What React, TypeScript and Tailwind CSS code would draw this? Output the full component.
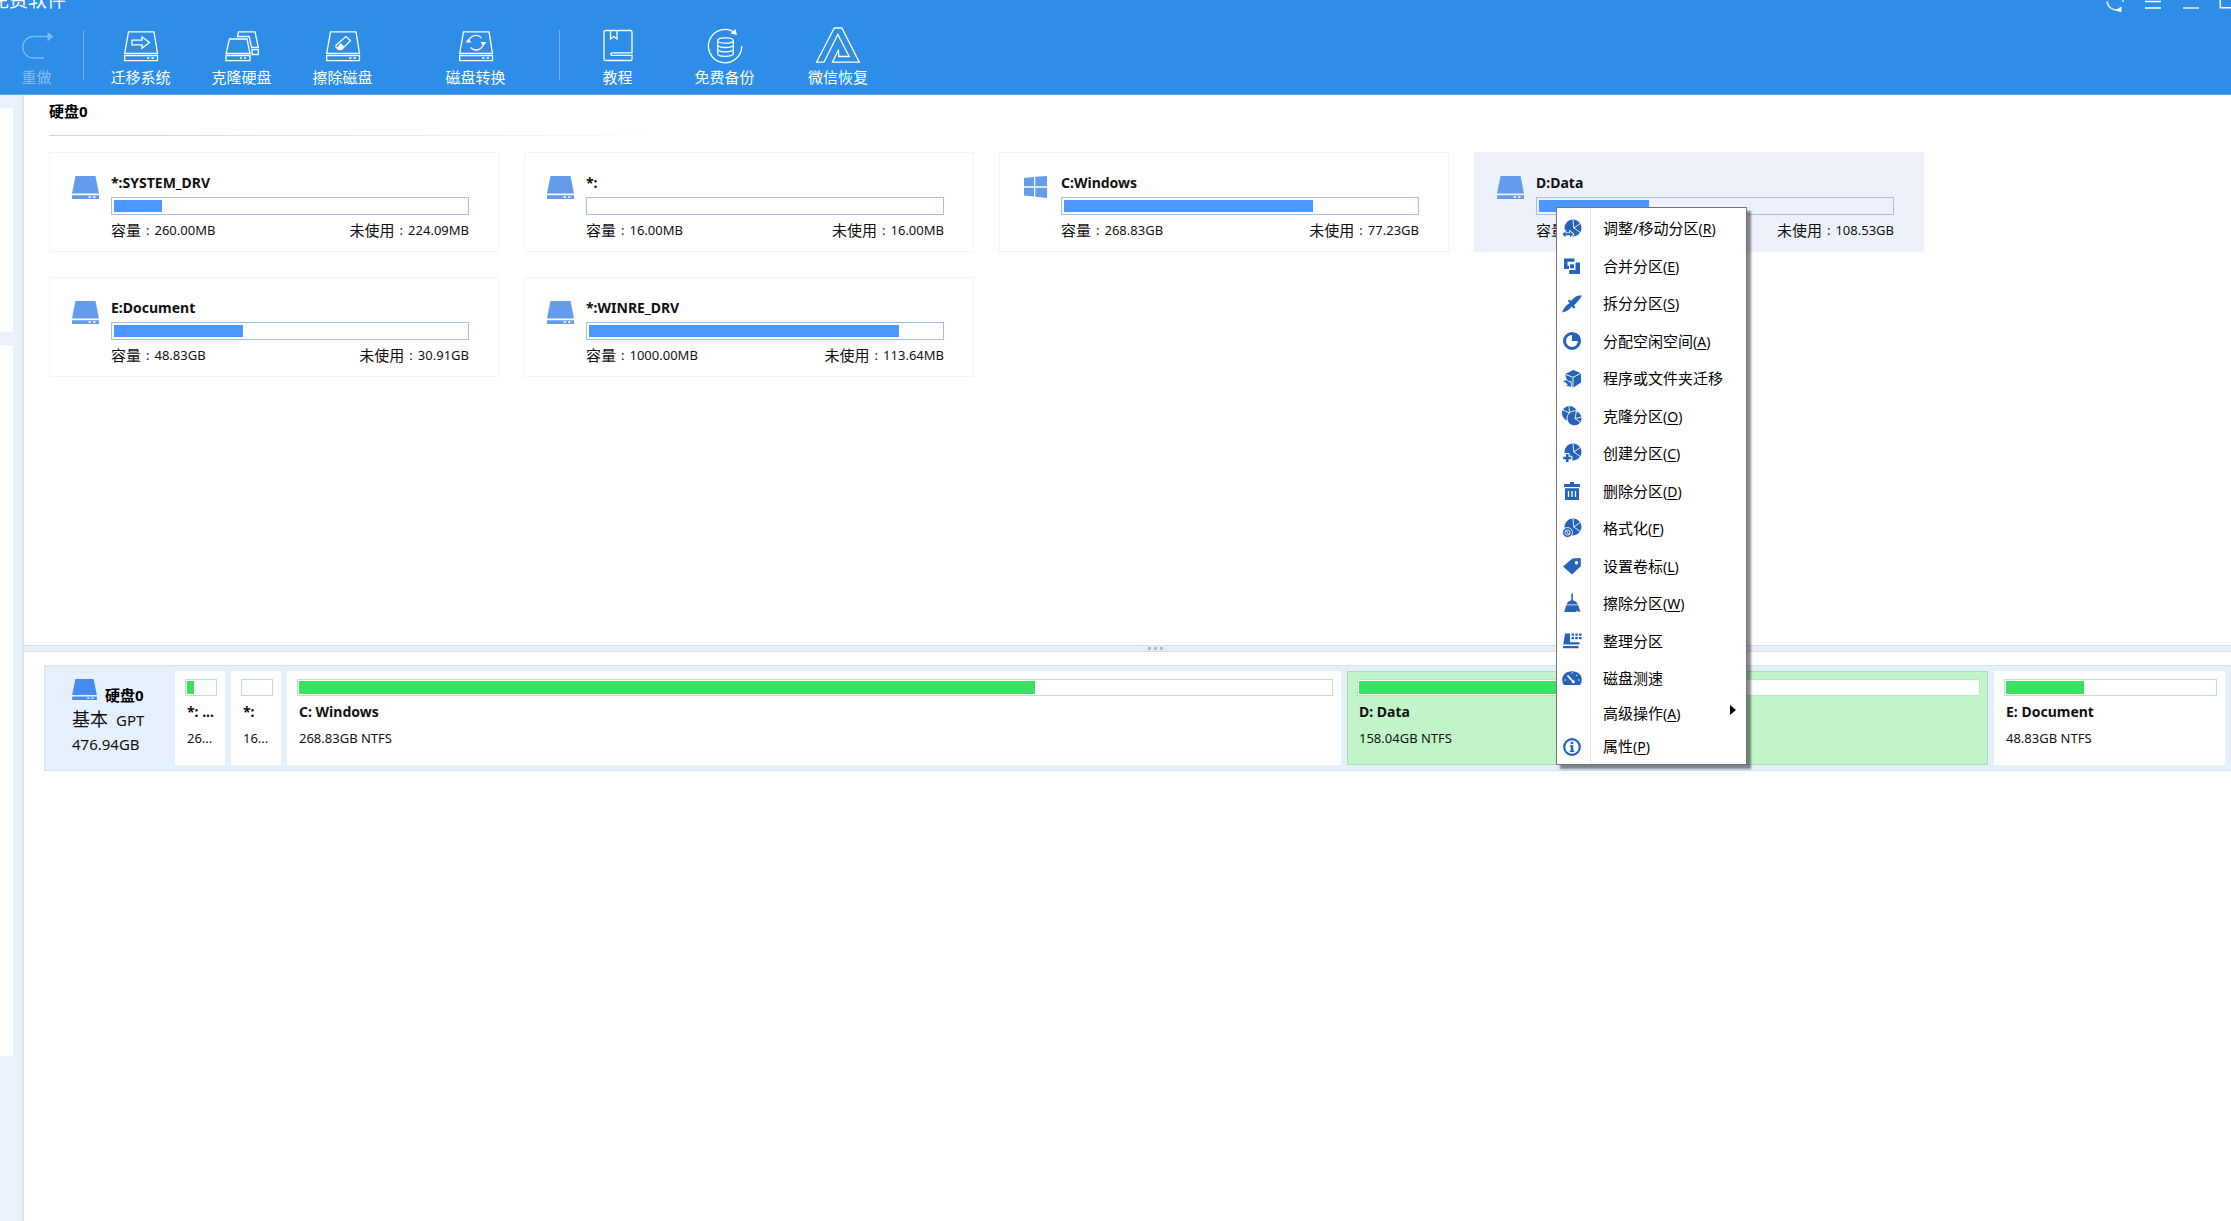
import React from "react";

const CJK = "font-['Noto_Sans','Noto_Sans_CJK_SC',sans-serif]";

/* ---------- toolbar icons ---------- */

type IconProps = { className?: string };

const line = {
  fill: "none",
  stroke: "currentColor",
  strokeWidth: 1.3,
  strokeLinejoin: "miter" as const,
};

const RedoIcon = () => (
  <svg width="36" height="38" viewBox="0 0 36 38" aria-hidden="true">
    <path d="M30 10.5H14.5a10.7 10.7 0 0 0 0 21.5H25" {...line} />
    <path d="M28.500 6v9.500l6-5z" fill="currentColor" />
  </svg>
);

const DriveBase = () => (
  <>
    <path d="M5.500 5.800h25.500l3.500 21.500H1.700z" {...line} />
    <path d="M1.700 29.500h32.800v5.200H1.700z" {...line} />
    <path d="M24 32h2.500M28.500 32h2.500" {...line} />
  </>
);

const MigrateIcon = () => (
  <svg width="36" height="38" viewBox="0 0 36 38" aria-hidden="true">
    <DriveBase />
    <path d="M9 14.200h10v-3.500l7.500 5.800-7.500 5.800v-3.500H9z" {...line} />
  </svg>
);

const CloneIcon = () => (
  <svg width="36" height="38" viewBox="0 0 36 38" aria-hidden="true">
    <path d="M5.500 13h17.500l3 14.500H2z" {...line} />
    <path d="M2 29.500h24v5.200H2z" {...line} />
    <path d="M16 32h2M20 32h2" {...line} />
    <path d="M13.500 10.500l1-4.700H31l3.300 15.500h-6.800L25.200 10.500z" {...line} />
    <path d="M28 23.500h6.300v5H28z" {...line} />
  </svg>
);

const EraseIcon = () => (
  <svg width="36" height="38" viewBox="0 0 36 38" aria-hidden="true">
    <DriveBase />
    <path d="M20.800 10.500l4.700 4-9 9.200h-2.800l-2.700-2.400v-2z" {...line} />
    <path d="M15.500 17.200l4 3.400-3.300 3h-2.500l-1.500-1.800z" fill="currentColor" />
  </svg>
);

const ConvertIcon = () => (
  <svg width="36" height="38" viewBox="0 0 36 38" aria-hidden="true">
    <DriveBase />
    <path d="M10.500 16a7.500 7.500 0 0 1 13-4M25.500 17a7.500 7.500 0 0 1-13 4.500" {...line} />
    <path d="M7.500 16.500h6l-3-4zM22.500 16h6l-3 4z" fill="currentColor" />
  </svg>
);

const BookIcon = () => (
  <svg width="36" height="38" viewBox="0 0 36 38" aria-hidden="true">
    <path d="M32 27.500V6a1.500 1.500 0 0 0-1.500-1.500h-25A1.500 1.500 0 0 0 4 6v27a1.500 1.500 0 0 0 1.500 1.500H31a1 1 0 0 0 1-1v-4.200H12a1.200 1.200 0 0 1 0-2.500h20" {...line} />
    <path d="M10.500 4.500v8.500l3.300-2.500 3.200 2.500V4.500" {...line} />
  </svg>
);

const BackupIcon = () => (
  <svg width="38" height="38" viewBox="0 0 38 38" aria-hidden="true">
    <path d="M29.500 7a16.700 16.700 0 1 0 6.300 13" {...line} />
    <path d="M24.500 7.500l5-4.500 1.500 6z" fill="currentColor" />
    <ellipse cx="19.500" cy="14.500" rx="7.800" ry="2.700" {...line} />
    <path d="M11.700 14.500v13.200c0 3.500 15.600 3.500 15.600 0V14.500M11.700 19c0 3.300 15.600 3.300 15.600 0M11.700 23.300c0 3.300 15.600 3.300 15.600 0" {...line} />
  </svg>
);

const RecoverIcon = () => (
  <svg width="46" height="38" viewBox="0 0 46 38" aria-hidden="true">
    <path d="M1.500 36.200L19.300 2h7.500l17.500 34.200H17.500l6-12.500.3 6.800h10.400L22.800 8.500 9 36.200z" {...line} />
  </svg>
);

/* ---------- drive icons ---------- */

const DriveIcon = ({ className }: IconProps) => (
  <svg viewBox="0 0 27 23" className={className} aria-hidden="true">
    <path d="M3.500 0h20L27 17.500H0z" fill="currentColor" />
    <path d="M0 19.200h27V23H0z" fill="currentColor" />
    <path d="M16.500 21h2.500M21 21h2.500" stroke="#fff" strokeWidth="1.400" />
  </svg>
);

const WindowsIcon = ({ className }: IconProps) => (
  <svg viewBox="0 0 23 22" className={className} aria-hidden="true" fill="currentColor">
    <path d="M0 2l10-1v9.300H0zM11.300.800L23 0v10.300H11.300zM0 11.700h10V20.500L0 19.500zM11.300 11.700H23V22l-11.700-1.300z" />
  </svg>
);

/* ---------- menu icons, 20 x 20 ---------- */

const M = ({ children }: { children: React.ReactNode }) => (
  <svg width="20" height="20" viewBox="0 0 20 20" fill="currentColor" aria-hidden="true">
    {children}
  </svg>
);

const Pie = () => (
  <>
    <circle cx="11" cy="9" r="8.500" />
    <path d="M11 .500l.800 8.500 6.500-4.500M11.800 9l6.500 4.500" stroke="#fff" strokeWidth="0.900" fill="none" />
  </>
);

const ResizeIcon = () => (
  <M>
    <Pie />
    <path d="M0 15.200l3.500-3.200v2.200h4.500v-2.200l3.500 3.200-3.500 3.200v-2.200H3.500v2.200z" stroke="#fff" strokeWidth="1.400" />
    <path d="M.500 15.200l3-3v2h4.500v-2l3 3-3 3v-2H3.500v2z" />
  </M>
);
const MergeIcon = () => (
  <M>
    <path d="M2 2.500h10.500v3.200H5.500v4H7V13H2z" />
    <path d="M8 8.300h4v4H8z" />
    <path d="M13.500 6.500H18V18H7.200v-4h6.300z" />
  </M>
);
const SplitIcon = () => (
  <M>
    <path d="M20 1.500c-5-.5-8 1.500-11 5.500L7.500 5.500 5.800 7l2 2C4 11 1.500 14.500 0 18.500c4-1 7.500-2.500 9.800-6l2 2.300 1.700-1.500-1.500-2C15 9 17.500 5.500 20 1.500z" />
  </M>
);
const AllocateIcon = () => (
  <M>
    <circle cx="10" cy="10" r="7.500" fill="none" stroke="currentColor" strokeWidth="3" />
    <path d="M10 2v8h8V5l-4-3z" />
  </M>
);
const MoveAppIcon = () => (
  <M>
    <path d="M11.500 1L19 4.200v9.300L11.500 18.500 6 15.500 3 5z" />
    <path d="M2.500 5l8.500 3.300L19 4.200M11 8.300v10.500" stroke="#fff" strokeWidth="0.900" fill="none" />
    <path d="M.500 12.300c3-2.300 6-1.300 6.500.7l2-.8.5 6.300-6-1.700 1.700-1c-1-2-2.700-2.500-4.700-3.500z" stroke="#fff" strokeWidth="0.800" />
  </M>
);
const ClonePartIcon = () => (
  <M>
    <circle cx="7.500" cy="7.500" r="7.500" />
    <path d="M7 0l.500 7L1 4" stroke="#fff" strokeWidth="0.900" fill="none" />
    <circle cx="12.500" cy="12.300" r="7.500" stroke="#fff" strokeWidth="0.900" />
    <path d="M14.500 5l-1.500 7.500 5.500 4M13 12.500l7-1.500" stroke="#fff" strokeWidth="0.900" fill="none" />
  </M>
);
const CreateIcon = () => (
  <M>
    <Pie />
    <path d="M3.800 10.600h3v2.900h2.900v3H6.800v2.900h-3v-2.900H.900v-3h2.900z" stroke="#fff" strokeWidth="1.400" />
    <path d="M4 11h2.500v2.800h2.800v2.500H6.500v2.800H4v-2.800H1.200v-2.500H4z" />
  </M>
);
const DeleteIcon = () => (
  <M>
    <path d="M8 1h4v2h6v3H2V3h6zM3 7.200h14V19H3z" />
    <path d="M6.500 10v6M10 10v6M13.500 10v6" stroke="#fff" strokeWidth="1.300" />
  </M>
);
const FormatIcon = () => (
  <M>
    <Pie />
    <circle cx="5.500" cy="14.500" r="5" stroke="#fff" strokeWidth="0.900" />
    <circle cx="5.500" cy="14.500" r="2.600" fill="none" stroke="#fff" strokeWidth="0.900" />
    <path d="M4.300 12.500l2.400 4" stroke="#fff" strokeWidth="0.900" />
  </M>
);
const LabelIcon = () => (
  <M>
    <path fillRule="evenodd" d="M10.500 2.500L18 2a.8.800 0 0 1 .800.800v7.500L10 18.500 1 10.500zM14.500 5a1.700 1.700 0 1 0 0 3.400 1.700 1.700 0 0 0 0-3.400z" />
  </M>
);
const WipeIcon = () => (
  <M>
    <path d="M9.300.500h1.600v6.800c2.500.7 4 2 4.800 4.200H4.500C5.300 9.300 7 8 9.300 7.300zM4 12.300h12.300c.5 2.300 1.200 4.400 2.200 6.200l-2.500.3-1-1.300L14 19H2c1-2 1.600-4 2-6.700z" />
  </M>
);
const DefragIcon = () => (
  <M>
    <path d="M3 2.500h5v8.800h9.500v2.200H1.300zM1 15h15.500v2.300H1zM9.500 2.500h2.500v2.300H9.500zM13.300 2.500h2.500v2.300h-2.500zM17 2.500h2.500v2.300H17zM9.500 6h2.500v2.300H9.500zM13.300 6h2.500v2.300h-2.500zM17 6h2.500v2.300H17z" />
  </M>
);
const SpeedIcon = () => (
  <M>
    <path d="M2 17C-.5 13.500-.2 9.300 2 6.500 5.500 2 14.500 2 18 6.500c2.200 2.800 2.500 7 0 10.500z" />
    <path d="M5.500 7.500l5.500 6" stroke="#fff" strokeWidth="1.700" />
    <circle cx="11.300" cy="13.800" r="1.500" fill="#fff" />
    <path d="M2.500 12h1.500M9.500 5h1.200M14 7.500h1.300M16 12h1.500" stroke="#fff" strokeWidth="1" />
  </M>
);
const InfoIcon = () => (
  <M>
    <circle cx="10" cy="10" r="7.800" fill="none" stroke="currentColor" strokeWidth="2.200" />
    <path d="M8.700 4.800h2.600V7H8.700zM7.800 8.300h3.500v5.200h1V15H7.800v-1.500h1V9.600h-1z" />
  </M>
);

/* ---------- data ---------- */

type Tool = { label: string; icon: React.ReactNode; box: string };

const diskTools: Tool[] = [
  { label: "迁移系统", icon: <MigrateIcon />, box: "w-[101px]" },
  { label: "克隆硬盘", icon: <CloneIcon />, box: "w-[101px]" },
  { label: "擦除磁盘", icon: <EraseIcon />, box: "w-[101px]" },
  { label: "磁盘转换", icon: <ConvertIcon />, box: "ml-8 w-[101px]" },
];

const helpTools: Tool[] = [
  { label: "教程", icon: <BookIcon />, box: "w-[107px]" },
  { label: "免费备份", icon: <BackupIcon />, box: "w-[107px]" },
  { label: "微信恢复", icon: <RecoverIcon />, box: "w-[120px]" },
];

type Partition = {
  name: string;
  total: string;
  free: string;
  used: number;
  system?: boolean;
  selected?: boolean;
};

const partitions: Partition[] = [
  { name: "*:SYSTEM_DRV", total: "260.00MB", free: "224.09MB", used: 13.6 },
  { name: "*:", total: "16.00MB", free: "16.00MB", used: 0 },
  { name: "C:Windows", total: "268.83GB", free: "77.23GB", used: 70.8, system: true },
  { name: "D:Data", total: "158.04GB", free: "108.53GB", used: 31.2, selected: true },
  { name: "E:Document", total: "48.83GB", free: "30.91GB", used: 36.6 },
  { name: "*:WINRE_DRV", total: "1000.00MB", free: "113.64MB", used: 88.2 },
];

type Entry = { label: string; hotkey?: string; icon?: React.ReactNode; submenu?: boolean };

const mainEntries: Entry[] = [
  { label: "调整/移动分区", hotkey: "R", icon: <ResizeIcon /> },
  { label: "合并分区", hotkey: "E", icon: <MergeIcon /> },
  { label: "拆分分区", hotkey: "S", icon: <SplitIcon /> },
  { label: "分配空闲空间", hotkey: "A", icon: <AllocateIcon /> },
  { label: "程序或文件夹迁移", icon: <MoveAppIcon /> },
  { label: "克隆分区", hotkey: "O", icon: <ClonePartIcon /> },
  { label: "创建分区", hotkey: "C", icon: <CreateIcon /> },
  { label: "删除分区", hotkey: "D", icon: <DeleteIcon /> },
  { label: "格式化", hotkey: "F", icon: <FormatIcon /> },
  { label: "设置卷标", hotkey: "L", icon: <LabelIcon /> },
  { label: "擦除分区", hotkey: "W", icon: <WipeIcon /> },
  { label: "整理分区", icon: <DefragIcon /> },
  { label: "磁盘测速", icon: <SpeedIcon /> },
];

const extraEntries: Entry[] = [
  { label: "高级操作", hotkey: "A", submenu: true },
  { label: "属性", hotkey: "P", icon: <InfoIcon /> },
];

type Segment = { name: string; detail: string; used: number; selected?: boolean };

const segments: Segment[] = [
  { name: "*: ...", detail: "26...", used: 24 },
  { name: "*:", detail: "16...", used: 0 },
  { name: "C: Windows", detail: "268.83GB NTFS", used: 71.3 },
  { name: "D: Data", detail: "158.04GB NTFS", used: 32, selected: true },
  { name: "E: Document", detail: "48.83GB NTFS", used: 37.5 },
];

/* ---------- pieces ---------- */

const ToolButton = ({ tool, muted }: { tool: Tool; muted?: boolean }) => (
  <button
    type="button"
    disabled={muted}
    className={`flex flex-col items-center gap-[3px] text-white ${tool.box} ${muted ? "opacity-40" : ""}`}
  >
    {tool.icon}
    <span className="text-[15px] leading-5 whitespace-nowrap">{tool.label}</span>
  </button>
);

const Header = () => (
  <header className="flex h-[95px] flex-col overflow-hidden border-b border-[#5ba5ee] bg-[#2d8de7] text-white">
    <div className="flex h-[26px] shrink-0 justify-between">
      <h1 className="-mt-3 -ml-2.5 text-[19px] leading-6">免费软件</h1>
      <div className="flex">
        <button type="button" aria-label="刷新" className="flex w-[38px] justify-center">
          <svg width="20" height="12" viewBox="0 0 20 12" aria-hidden="true">
            <path d="M2 1.500c1 6 6 9.500 12 8M18 0v2" fill="none" stroke="#d3e6fa" strokeWidth="1.600" />
            <path d="M16 7v4.500l-4.500-1z" fill="#fff" stroke="#fff" />
          </svg>
        </button>
        <button type="button" aria-label="菜单" className="flex w-[38px] justify-center">
          <svg width="18" height="12" viewBox="0 0 18 12" aria-hidden="true">
            <path d="M1 1.500h16M1 8h16" stroke="#fff" strokeWidth="1.400" />
          </svg>
        </button>
        <button type="button" aria-label="最小化" className="flex w-[37px] justify-center">
          <svg width="18" height="12" viewBox="0 0 18 12" aria-hidden="true">
            <path d="M1 8h16" stroke="#fff" strokeWidth="1.400" />
          </svg>
        </button>
        <button type="button" aria-label="最大化" className="flex w-[22px] justify-end">
          <svg width="12" height="12" viewBox="0 0 12 12" aria-hidden="true">
            <path d="M1.200 0v7.800H12" fill="none" stroke="#fff" strokeWidth="1.400" />
          </svg>
        </button>
      </div>
    </div>
    <nav className="flex items-start">
      <ToolButton tool={{ label: "重做", icon: <RedoIcon />, box: "w-[73px]" }} muted />
      <div className="mt-1 ml-2.5 h-[50px] w-px bg-[#6fb1f0]" />
      <div className="ml-1.5 flex">
        {diskTools.map((t) => (
          <ToolButton key={t.label} tool={t} />
        ))}
      </div>
      <div className="mt-1 ml-[33px] h-[50px] w-px bg-[#6fb1f0]" />
      <div className="ml-1 flex">
        {helpTools.map((t) => (
          <ToolButton key={t.label} tool={t} />
        ))}
      </div>
    </nav>
  </header>
);

const MenuEntry = ({ entry }: { entry: Entry }) => (
  <button type="button" role="menuitem" className="flex w-full items-center text-left text-black">
    <span className="flex w-[30px] shrink-0 justify-center text-[#2563b8]">{entry.icon}</span>
    <span className="ml-4 grow text-[15px] whitespace-nowrap">
      {entry.label}
      {entry.hotkey && (
        <span className="text-sm">
          (<u className="underline-offset-2">{entry.hotkey}</u>)
        </span>
      )}
    </span>
    {entry.submenu && (
      <svg width="6" height="10" viewBox="0 0 6 10" className="mr-2.5 mb-2" aria-hidden="true">
        <path d="M0 0l6 5-6 5z" fill="#000" />
      </svg>
    )}
  </button>
);

const ContextMenu = () => (
  <div
    role="menu"
    className="absolute top-[54px] left-[81px] z-10 w-[191px] border border-[#757575] bg-white pt-0.5 pb-px shadow-[4px_4px_2px_rgba(0,0,0,0.45)]"
  >
    <div className="absolute inset-y-0 left-[33px] w-px bg-[#e2e8f2]" />
    <div className="grid h-[487px] auto-rows-fr">
      {mainEntries.map((e) => (
        <MenuEntry key={e.label} entry={e} />
      ))}
    </div>
    <div className="grid auto-rows-[33px]">
      {extraEntries.map((e) => (
        <MenuEntry key={e.label} entry={e} />
      ))}
    </div>
  </div>
);

const Amount = ({ label, value }: { label: string; value: string }) => (
  <span className="flex items-center text-[15px] whitespace-nowrap">
    {label}
    <span className="mx-[5px] text-[13px]">:</span>
    <span className="text-[13px]">{value}</span>
  </span>
);

const PartitionCard = ({ p }: { p: Partition }) => (
  <article
    className={`relative flex h-[100px] border pt-5 pr-[29px] ${
      p.selected ? "border-[#edf2fa] bg-[#edf2fa]" : "border-[#f3f4f7]"
    }`}
  >
    <div className="flex w-[61px] shrink-0 justify-center pt-[3px] pl-[10px] text-[#649bea]">
      {p.system ? <WindowsIcon className="h-[22px] w-[23px]" /> : <DriveIcon className="h-[23px] w-[27px]" />}
    </div>
    <div className="min-w-0 grow">
      <h3 className="text-sm leading-5 font-bold">{p.name}</h3>
      <div className="mt-1 h-[18px] border border-[#a6c0e4] p-0.5">
        <div className="h-full bg-[#4c97ff]" style={{ width: `${p.used}%` }} />
      </div>
      <div className="mt-[5px] flex justify-between leading-5">
        <Amount label="容量" value={p.total} />
        <Amount label="未使用" value={p.free} />
      </div>
    </div>
    {p.selected && <ContextMenu />}
  </article>
);

const SegmentBox = ({ s }: { s: Segment }) => (
  <article
    className={`h-[94px] min-w-0 border pt-[7px] pr-[7px] pl-[9px] ${
      s.selected ? "border-[#a3dfaf] bg-[#c1f5c9]" : "border-white bg-white"
    }`}
  >
    <div className="h-[17px] border border-[#b9e6c2] bg-white p-px">
      <div className="h-full bg-[#3bdf62]" style={{ width: `${s.used}%` }} />
    </div>
    <h3 className="mt-1.5 ml-0.5 text-sm leading-5 font-bold whitespace-nowrap">{s.name}</h3>
    <p className="mt-1.5 ml-0.5 text-[13px] leading-5 whitespace-nowrap">{s.detail}</p>
  </article>
);

export default function App() {
  return (
    <div className={`flex min-h-screen flex-col overflow-hidden bg-white text-[#111] ${CJK}`}>
      <Header />
      <div className="flex grow">
        <aside className="flex w-6 shrink-0 flex-col gap-[13px] border-r-2 border-[#dce5f2] bg-[#e9f1fd] pt-[13px] pr-[9px]">
          <div className="h-56 bg-white" />
          <div className="h-[711px] bg-white" />
        </aside>
        <main className="flex min-w-0 grow flex-col">
          <section className="min-h-[550px] pt-1.5 pl-[25px]">
            <h2 className="text-[15px] leading-5 font-bold text-black">硬盘0</h2>
            <div className="mt-3.5 h-px w-[650px] bg-linear-to-r from-[#cbd5e4] to-white" />
            <div className="mt-4 grid grid-cols-[repeat(auto-fill,450px)] gap-[25px]">
              {partitions.map((p) => (
                <PartitionCard key={p.name} p={p} />
              ))}
            </div>
          </section>
          <div className="flex h-[7px] items-center justify-center gap-[3px] border-y border-[#d5deea] bg-[#e9eef6] pl-14">
            <i className="size-[3px] bg-[#b0bccd]" />
            <i className="size-[3px] bg-[#b0bccd]" />
            <i className="size-[3px] bg-[#b0bccd]" />
          </div>
          <section className="pt-[13px] pl-5">
            <div className="grid grid-cols-[124px_50px_50px_1054fr_641fr_231fr] gap-1.5 border border-r-0 border-[#d6e3f4] bg-[#e5effe] py-[5px] pr-1.5">
              <div className="pl-[27px]">
                <div className="flex gap-2 pt-2">
                  <DriveIcon className="h-[21px] w-[25px] text-[#468cf0]" />
                  <h2 className="pt-1.5 text-[15px] leading-5 font-bold text-black">硬盘0</h2>
                </div>
                <p className="flex items-baseline gap-2 text-lg leading-7">
                  基本 <span className="text-[15px]">GPT</span>
                </p>
                <p className="text-[15px] leading-5">476.94GB</p>
              </div>
              {segments.map((s) => (
                <SegmentBox key={s.name} s={s} />
              ))}
            </div>
          </section>
        </main>
      </div>
    </div>
  );
}
